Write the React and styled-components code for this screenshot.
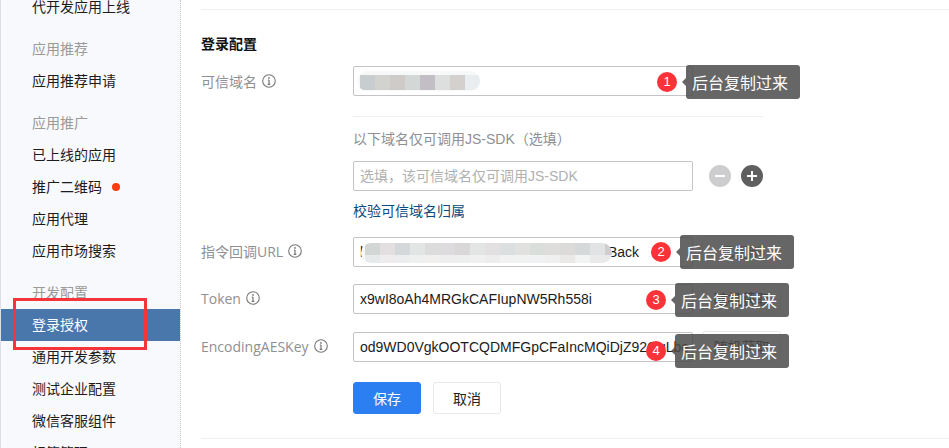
import React from 'react';
import styled, { createGlobalStyle } from 'styled-components';

const cjk = '"Open Sans", "Noto Sans CJK SC", sans-serif';

const GlobalStyle = createGlobalStyle`
  html, body {
    margin: 0;
    height: 448px;
    overflow: hidden;
    background: #fff;
    font-family: ${cjk};
    font-size: 14px;
  }
`;

const Page = styled.div`
  position: relative;
  display: flex;
  height: 448px;
  overflow: hidden;
  border-left: 1px solid #dcdfe6;
`;

const Sidebar = styled.nav`
  width: 179px;
  flex: none;
  background: #f8f9fc;
  border-right: 1px dotted #c8c8cc;
`;

const SideList = styled.ul`
  list-style: none;
  margin: -9px 0 0;
  padding: 0;
`;

const SideItem = styled.li`
  display: flex;
  align-items: center;
  height: 32px;
  padding-left: 31px;
  color: ${({ $active }) => ($active ? '#fff' : '#1c1c1c')};
  background: ${({ $active }) => ($active ? '#4a77ab' : 'transparent')};
  line-height: 32px;
  white-space: nowrap;
`;

const SideHeading = styled(SideItem)`
  margin-top: 10px;
  color: #9a9a9a;
`;

const Dot = styled.span`
  width: 8px;
  height: 8px;
  margin-left: 10px;
  border-radius: 50%;
  background: #fa3c10;
`;

const RedFrame = styled.div`
  position: absolute;
  left: 12px;
  top: 298px;
  width: 128px;
  height: 46px;
  border: 3px solid #f5353a;
`;

const Main = styled.main`
  flex: 1;
  min-width: 0;
  padding: 9px 0 0 20px;
`;

const Rule = styled.hr`
  height: 1px;
  margin: 0;
  border: 0;
  background: #eeeff1;
`;

const Title = styled.h2`
  margin: 23px 0 0;
  height: 22px;
  font-size: 14px;
  font-weight: 700;
  line-height: 22px;
  color: #111;
`;

const Row = styled.div`
  display: grid;
  grid-template-columns: 152px 340px auto;
  align-items: center;
  margin-top: ${({ $gap }) => $gap}px;
  height: 30px;
`;

const Label = styled.label`
  display: flex;
  align-items: center;
  gap: 5px;
  margin-top: -1px;
  color: #8f8f94;
  white-space: nowrap;
`;

const InfoIcon = () => (
  <svg width="14" height="14" viewBox="0 0 14 14" fill="none" stroke="#777">
    <circle cx="7" cy="7" r="6.3" strokeWidth="1.1" />
    <path d="M7 6v4.4M5.7 10.4h2.6M5.8 6H7" strokeWidth="1.2" />
    <circle cx="7" cy="3.9" r=".9" fill="#777" stroke="none" />
  </svg>
);

const Field = styled.div`
  position: relative;
  box-sizing: border-box;
  width: 340px;
  height: 30px;
  padding: 0 6px;
  border: 1px solid #c4c4c6;
  border-radius: 2px;
  background: #fff;
  font-family: "Liberation Sans", "Noto Sans CJK SC", sans-serif;
  line-height: 28px;
  color: ${({ $placeholder }) => ($placeholder ? '#b0b0b0' : '#1b1b1b')};
  white-space: nowrap;
`;

const Mosaic = styled.div`
  position: absolute;
  left: ${({ $left }) => $left}px;
  top: ${({ $top }) => $top}px;
  width: ${({ $width }) => $width}px;
  height: 20px;
  padding-left: ${({ $inset }) => $inset}px;
  box-sizing: border-box;
  border-radius: 10px;
  overflow: hidden;
  background: #f7f8f8;
  display: flex;
  flex-direction: column;
`;

const MosaicRow = styled.div`
  display: flex;
  height: ${({ $h }) => $h}px;
  margin-top: ${({ $mt }) => $mt || 0}px;
`;

const MosaicCell = styled.span`
  flex: none;
  width: 15px;
  background: ${({ $c }) => $c};
`;

const BackText = styled.span`
  position: absolute;
  left: 254px;
  top: 0;
`;

const SideButton = styled.button`
  box-sizing: border-box;
  width: 79px;
  height: 31px;
  margin-left: 9px;
  padding: 0;
  border: 1px solid #e4e6ea;
  border-radius: 3px;
  background: #fff;
  font: inherit;
  font-size: 14px;
  line-height: 29px;
  color: ${({ $ok }) => ($ok ? '#2a8a3c' : '#222')};
`;

const Mark = styled.div`
  position: absolute;
  left: ${({ $left }) => $left}px;
  top: ${({ $top }) => $top}px;
  display: flex;
  align-items: center;
  gap: 9px;
  height: 34px;
  z-index: 2;
`;

const Badge = styled.span`
  width: 20px;
  height: 20px;
  border-radius: 50%;
  background: #fb3338;
  color: #fff;
  font-family: "Liberation Sans", sans-serif;
  font-size: 13px;
  line-height: 20px;
  text-align: center;
`;

const Tip = styled.span`
  position: relative;
  box-sizing: border-box;
  width: 114px;
  height: 34px;
  padding-right: 6px;
  border-radius: 3px;
  background: rgba(75, 75, 75, 0.85);
  color: #fff;
  font-family: "Noto Sans CJK SC", sans-serif;
  font-size: 16px;
  line-height: 34px;
  text-align: center;

  &::before {
    content: '';
    position: absolute;
    left: -4px;
    top: 13px;
    border-style: solid;
    border-width: 4px 4px 4px 0;
    border-color: transparent rgba(75, 75, 75, 0.85) transparent transparent;
  }
`;

const SubBlock = styled.div`
  margin-left: 152px;
`;

const Divider = styled.div`
  width: 410px;
  height: 1px;
  margin-top: 20px;
  background: #eeeff1;
`;

const Hint = styled.p`
  margin: 11px 0 0;
  height: 22px;
  font-family: "Liberation Sans", "Noto Sans CJK SC", sans-serif;
  line-height: 22px;
  color: #8f8f94;
`;

const HintRow = styled.div`
  display: flex;
  align-items: center;
  margin-top: 11px;
`;

const RoundButton = styled.span`
  display: flex;
  align-items: center;
  justify-content: center;
  width: 22px;
  height: 22px;
  margin-left: ${({ $gap }) => $gap}px;
  border-radius: 50%;
  background: ${({ $muted }) => ($muted ? '#cdcdcf' : '#5f5f5f')};
`;

const SignIcon = ({ plus }) => (
  <svg width="12" height="12" viewBox="0 0 12 12" stroke="#fff" strokeWidth="2">
    <path d={plus ? 'M1 6h10M6 1v10' : 'M1 6h10'} />
  </svg>
);

const LinkText = styled.a`
  display: block;
  margin-top: 9px;
  height: 22px;
  line-height: 22px;
  color: #0a4a80;
`;

const Actions = styled.div`
  display: flex;
  gap: 12px;
  margin: 21px 0 0 152px;
`;

const Action = styled.button`
  box-sizing: border-box;
  width: 68px;
  height: 32px;
  padding: 0;
  border: 1px solid ${({ $primary }) => ($primary ? '#2b7ff0' : '#e6e8ec')};
  border-radius: 3px;
  background: ${({ $primary }) => ($primary ? '#2b7ff0' : '#fff')};
  color: ${({ $primary }) => ($primary ? '#fff' : '#222')};
  font: inherit;
  font-size: 14px;
`;

const BottomRule = styled(Rule)`
  margin-top: 24px;
`;

const navGroups = [
  { items: ['代开发应用上线'] },
  { heading: '应用推荐', items: ['应用推荐申请'] },
  { heading: '应用推广', items: ['已上线的应用', '推广二维码', '应用代理', '应用市场搜索'] },
  { heading: '开发配置', items: ['登录授权', '通用开发参数', '测试企业配置', '微信客服组件', '标签管理'] },
];

const domainBlur = ['#c8cdcf', '#d2d3cf', '#cfcbc9', '#d3d8d7', '#c3bec5', '#dcdfde', '#d3d0cd', '#e9edf0'];
const urlBlurTop = ['#d2d7d6', '#e3dfe0', '#d4d8da', '#e1e5e4', '#dcdcdc', '#dddbdd', '#d9d7d8', '#e2e5e4', '#e2e0e0', '#dcdfdf', '#e1e2df', '#d9dedb', '#dfdddc', '#dddbd9', '#d5d9d9', '#e2e3e4', '#d0cdcc'];
const urlBlurBottom = ['#e6eaea', '#eeecec', '#ecedee', '#eef0ef', '#f1f0ee', '#eeeeee', '#ecefee', '#f0f0f0', '#ecedec', '#f2f2f2', '#f1f2f2', '#f0f2f3', '#f1f0f0', '#eae9e8', '#f2f3f3', '#eaeaea', '#e8e8e8'];

const cells = colors => colors.map((c, i) => <MosaicCell key={i} $c={c} />);

export default function App() {
  return (
    <Page>
      <GlobalStyle />
      <Sidebar>
        <SideList>
          {navGroups.map(group => (
            <React.Fragment key={group.items[0]}>
              {group.heading && <SideHeading>{group.heading}</SideHeading>}
              {group.items.map(item => (
                <SideItem key={item} $active={item === '登录授权'}>
                  {item}
                  {item === '推广二维码' && <Dot />}
                </SideItem>
              ))}
            </React.Fragment>
          ))}
        </SideList>
      </Sidebar>
      <RedFrame />
      <Main>
        <Rule />
        <Title>登录配置</Title>
        <Row $gap={11}>
          <Label>可信域名 <InfoIcon /></Label>
          <Field>
            <Mosaic $left={3} $top={4} $width={123} $inset={3}>
              <MosaicRow $h={15} $mt={4}>{cells(domainBlur)}</MosaicRow>
            </Mosaic>
            <Mark $left={303} $top={-2}>
              <Badge>1</Badge>
              <Tip>后台复制过来</Tip>
            </Mark>
          </Field>
        </Row>
        <SubBlock>
          <Divider />
          <Hint>以下域名仅可调用JS-SDK（选填）</Hint>
          <HintRow>
            <Field $placeholder>选填，该可信域名仅可调用JS-SDK</Field>
            <RoundButton $muted $gap={16}><SignIcon /></RoundButton>
            <RoundButton $gap={10}><SignIcon plus /></RoundButton>
          </HintRow>
          <LinkText>校验可信域名归属</LinkText>
        </SubBlock>
        <Row $gap={14}>
          <Label>指令回调URL <InfoIcon /></Label>
          <Field>
            h
            <BackText>Back</BackText>
            <Mosaic $left={7} $top={5} $width={251} $inset={4}>
              <MosaicRow $h={12}>{cells(urlBlurTop)}</MosaicRow>
              <MosaicRow $h={8}>{cells(urlBlurBottom)}</MosaicRow>
            </Mosaic>
            <Mark $left={297} $top={-3}>
              <Badge>2</Badge>
              <Tip>后台复制过来</Tip>
            </Mark>
          </Field>
          <SideButton $ok>已复制</SideButton>
        </Row>
        <Row $gap={17}>
          <Label>Token <InfoIcon /></Label>
          <Field>
            x9wI8oAh4MRGkCAFIupNW5Rh558i
            <Mark $left={292} $top={-2}>
              <Badge>3</Badge>
              <Tip>后台复制过来</Tip>
            </Mark>
          </Field>
          <SideButton>随机获取</SideButton>
        </Row>
        <Row $gap={18}>
          <Label>EncodingAESKey <InfoIcon /></Label>
          <Field>
            od9WD0VgkOOTCQDMFGpCFaIncMQiDjZ92QqLbe
            <Mark $left={292} $top={1}>
              <Badge>4</Badge>
              <Tip>后台复制过来</Tip>
            </Mark>
          </Field>
          <SideButton>随机获取</SideButton>
        </Row>
        <Actions>
          <Action $primary>保存</Action>
          <Action>取消</Action>
        </Actions>
        <BottomRule />
      </Main>
    </Page>
  );
}
